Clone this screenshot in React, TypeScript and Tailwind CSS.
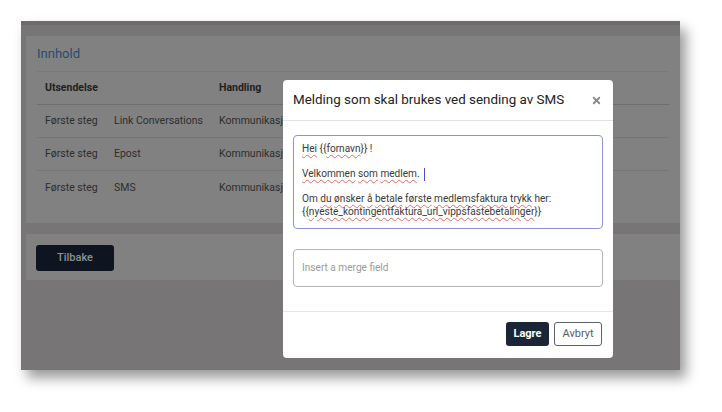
import * as React from "react";
import { X } from "lucide-react";

const wavy = "underline decoration-wavy decoration-[#e86a6a] decoration-[0.5px] underline-offset-[1.5px]";

function W({ children }: { children: React.ReactNode }) {
  return <span className={wavy}>{children}</span>;
}

const rows = [
  { step: "Første steg", type: "Link Conversations", action: "Kommunikasjon" },
  { step: "Første steg", type: "Epost", action: "Kommunikasjon" },
  { step: "Første steg", type: "SMS", action: "Kommunikasjon" },
];

function BackgroundPage() {
  return (
    <div className="flex flex-col">
      <div className="h-[4px] bg-[#6d6b6b]" />
      <div className="flex flex-col gap-[11px] pl-[5px] pt-[11px]">
        <div className="h-[187px] bg-[#818181] px-[11px] pt-[10px]">
          <h2 className="text-[13px] leading-[16px] font-normal text-[#2b4a72]">Innhold</h2>
          <div className="mt-[9px] border-t border-[#7a7a7a]">
            <div className="flex h-[33px] items-center border-b border-[#6f6f6f] text-[10.5px] font-bold text-[#1f1f1f]">
              <span className="w-[182px] pl-[8px]">Utsendelse</span>
              <span>Handling</span>
            </div>
            {rows.map((row, idx) => (
              <div
                key={idx}
                className={
                  "flex h-[33px] items-center text-[10.5px] text-[#2e2e2e] " +
                  (idx < rows.length - 1 ? "border-b border-[#767676]" : "")
                }
              >
                <span className="w-[77px] pl-[8px] whitespace-nowrap">{row.step}</span>
                <span className="w-[105px] whitespace-nowrap">{row.type}</span>
                <span className="whitespace-nowrap">{row.action}</span>
              </div>
            ))}
          </div>
        </div>
        <div className="h-[46px] bg-[#818181] pl-[10px] pt-[10px]">
          <button
            type="button"
            className="h-[26px] w-[78px] rounded-[3px] bg-[#0e1520] text-[11px] font-medium text-[#8b9096]"
          >
            Tilbake
          </button>
        </div>
      </div>
    </div>
  );
}

function SmsModal() {
  return (
    <div className="absolute left-[262px] top-[59px] flex h-[278px] w-[330px] flex-col rounded-[4px] bg-white">
      <div className="flex h-[41px] items-center justify-between border-b border-[#e3e3e3] pl-[10px] pr-[11px]">
        <h3 className="text-[13.4px] text-[#222]">Melding som skal brukes ved sending av SMS</h3>
        <X className="h-[11px] w-[11px] text-[#8a8a8a]" strokeWidth={4} />
      </div>
      <div className="flex flex-col gap-[20px] px-[10px] pt-[14px]">
        <div className="h-[94px] rounded-[4px] border border-[#8e93d6] px-[8px] pt-[7px] text-[10.1px] leading-[12.4px] text-[#3a3a3a]">
          <p>
            <W>Hei</W> {"{{"}
            <W>fornavn</W>
            {"}}"} !
          </p>
          <p className="mt-[12.4px]">
            <W>Velkommen</W> <W>som</W> <W>medlem</W>.
            <span className="ml-[4px] inline-block h-[13px] w-px bg-[#4a4fbf] align-middle" />
          </p>
          <p className="mt-[12.4px]">
            Om <W>du</W> <W>ønsker</W> <W>å</W> <W>betale</W> <W>første</W> <W>medlemsfaktura</W>{" "}
            <W>trykk</W> her:
            <br />
            {"{{"}
            <W>nyeste_kontingentfaktura_url_vippsfastebetalinger</W>
            {"}}"}
          </p>
        </div>
        <div className="flex h-[38px] items-center rounded-[4px] border border-[#b3b3b3] pl-[8px] text-[10.1px] text-[#9a9a9a]">
          Insert a merge field
        </div>
      </div>
      <div className="mt-[24px] flex flex-1 items-start justify-end gap-[5px] border-t border-[#e6e6e6] pr-[11px] pt-[10px]">
        <button
          type="button"
          className="h-[24px] w-[43px] rounded-[3px] bg-[#1b2538] text-[11px] font-bold text-white"
        >
          Lagre
        </button>
        <button
          type="button"
          className="h-[24px] w-[48px] rounded-[3px] border border-[#5a6272] bg-white text-[11px] text-[#555c66]"
        >
          Avbryt
        </button>
      </div>
    </div>
  );
}

export default function App() {
  return (
    <div
      className="h-[412px] w-[722px] overflow-hidden bg-white pl-[21px] pt-[21px]"
      style={{ fontFamily: "Roboto, 'Liberation Sans', sans-serif" }}
    >
      <div className="relative h-[349px] w-[659px] overflow-hidden bg-[#777575] shadow-[6px_8px_12px_rgba(0,0,0,0.4)]">
        <BackgroundPage />
        <SmsModal />
      </div>
    </div>
  );
}
